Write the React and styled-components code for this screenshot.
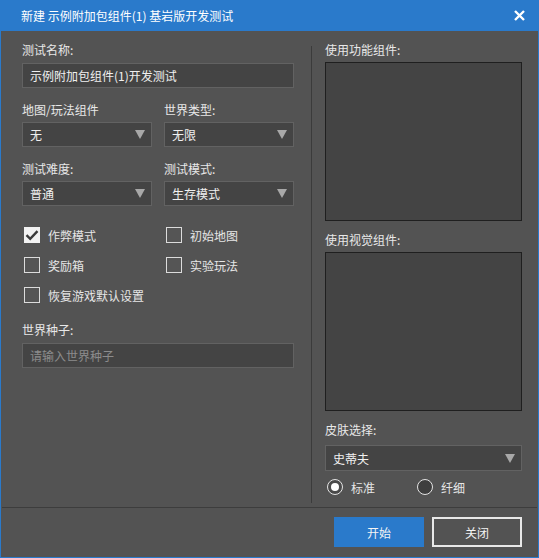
import React from 'react';
import styled, { createGlobalStyle } from 'styled-components';

const GlobalStyle = createGlobalStyle`
  html, body {
    margin: 0;
    padding: 0;
    background: #535353;
  }
  * { box-sizing: border-box; }
`;

const Window = styled.div`
  width: 539px;
  height: 558px;
  display: flex;
  flex-direction: column;
  background: #535353;
  border: 1px solid #2a7acb;
  border-top: none;
  font-family: "Noto Sans CJK SC", "Noto Sans", sans-serif;
  font-size: 12px;
  color: #e6e6e6;
  overflow: hidden;
`;

const TitleBar = styled.div`
  height: 31px;
  flex: none;
  background: #2a7acb;
  display: flex;
  align-items: center;
  justify-content: space-between;
  padding: 0 10px 0 21px;
  margin: 0 -1px;
  color: #fff;
  font-size: 12px;
`;

const CloseBtn = styled.div`
  width: 20px;
  height: 20px;
  display: flex;
  align-items: center;
  justify-content: center;
`;

const Body = styled.div`
  flex: 1;
  display: flex;
  padding: 11px 16px 0 21px;
`;

const LeftCol = styled.div`
  width: 272px;
  display: flex;
  flex-direction: column;
`;

const Divider = styled.div`
  width: 1px;
  background: #3b3b3b;
  margin: 4px 13px 4px 17px;
`;

const RightCol = styled.div`
  width: 197px;
  display: flex;
  flex-direction: column;
`;

const Label = styled.div`
  height: 16px;
  line-height: 16px;
  margin-bottom: ${p => p.$gap || 5}px;
  color: #e8e8e8;
`;

const Field = styled.div`
  display: flex;
  flex-direction: column;
  margin-bottom: ${p => p.$mb || 0}px;
`;

const Row = styled.div`
  display: grid;
  grid-template-columns: 130px 130px;
  column-gap: 12px;
  margin-bottom: ${p => p.$mb || 0}px;
`;

const Input = styled.div`
  height: 25px;
  background: #444444;
  border: 1px solid #626262;
  display: flex;
  align-items: center;
  padding: 0 7px;
  color: ${p => (p.$placeholder ? '#8c8c8c' : '#f0f0f0')};
`;

const Select = styled(Input)`
  justify-content: space-between;
  padding-right: 6px;
  height: ${p => p.$h || 25}px;
`;

const Arrow = styled.span`
  width: 0;
  height: 0;
  border-left: 5px solid transparent;
  border-right: 5px solid transparent;
  border-top: 9px solid #a8a8a8;
`;

const CheckGrid = styled.div`
  display: grid;
  grid-template-columns: 142px 130px;
  row-gap: 14px;
  padding-left: 2px;
  margin-top: 21px;
  margin-bottom: 19px;
`;

const CheckItem = styled.div`
  display: flex;
  align-items: center;
  gap: 8px;
  height: 16px;
  grid-column: ${p => (p.$full ? '1 / span 2' : 'auto')};
`;

const Box = styled.span`
  width: 16px;
  height: 16px;
  flex: none;
  display: flex;
  align-items: center;
  justify-content: center;
  background: ${p => (p.$checked ? '#f2f2f2' : '#555555')};
  border: 1px solid ${p => (p.$checked ? '#f2f2f2' : '#dcdcdc')};
`;

const Panel = styled.div`
  height: 159px;
  background: #444444;
  border: 1px solid #1f1f1f;
  margin-bottom: ${p => p.$mb || 0}px;
`;

const RadioRow = styled.div`
  display: grid;
  grid-template-columns: 90px 90px;
  margin-top: 8px;
  padding-left: 2px;
`;

const RadioItem = styled.div`
  display: flex;
  align-items: center;
  gap: 8px;
  height: 16px;
`;

const Circle = styled.span`
  width: 16px;
  height: 16px;
  flex: none;
  border-radius: 50%;
  border: 1.5px solid #e4e4e4;
  background: ${p => (p.$on ? '#4a4a4a' : '#3e3e3e')};
  display: flex;
  align-items: center;
  justify-content: center;
  &::after {
    content: '';
    width: 8px;
    height: 8px;
    border-radius: 50%;
    background: #ffffff;
    display: ${p => (p.$on ? 'block' : 'none')};
  }
`;

const Footer = styled.div`
  flex: none;
  height: 50px;
  border-top: 1px solid #3d3d3d;
  margin: 0 1px;
  display: flex;
  justify-content: flex-end;
  align-items: flex-start;
  gap: 8px;
  padding: 9px 15px 0 0;
`;

const Button = styled.button`
  width: 90px;
  height: 30px;
  font-family: inherit;
  font-size: 12px;
  color: #f4f4f4;
  background: ${p => (p.$primary ? '#2a7acb' : 'transparent')};
  border: ${p => (p.$primary ? 'none' : '2px solid #e8e8e8')};
  padding: 0;
  cursor: pointer;
`;

const Check = () => (
  <svg width="14" height="12" viewBox="0 0 14 12">
    <path d="M1.5 6.2 L5.2 9.8 L12.5 2.2" fill="none" stroke="#3a3a3a" strokeWidth="2.4" />
  </svg>
);

const checks = [
  { label: '作弊模式', checked: true },
  { label: '初始地图' },
  { label: '奖励箱' },
  { label: '实验玩法' },
  { label: '恢复游戏默认设置', full: true },
];

export default function App() {
  return (
    <>
      <GlobalStyle />
      <Window>
        <TitleBar>
          <span>新建 示例附加包组件(1) 基岩版开发测试</span>
          <CloseBtn>
            <svg width="11" height="11" viewBox="0 0 11 11">
              <path d="M1 1 L10 10 M10 1 L1 10" stroke="#ffffff" strokeWidth="2.4" />
            </svg>
          </CloseBtn>
        </TitleBar>
        <Body>
          <LeftCol>
            <Field $mb={14}>
              <Label>测试名称:</Label>
              <Input>示例附加包组件(1)开发测试</Input>
            </Field>
            <Row $mb={14}>
              <Field>
                <Label $gap={4}>地图/玩法组件</Label>
                <Select>无<Arrow /></Select>
              </Field>
              <Field>
                <Label $gap={4}>世界类型:</Label>
                <Select>无限<Arrow /></Select>
              </Field>
            </Row>
            <Row>
              <Field>
                <Label $gap={4}>测试难度:</Label>
                <Select>普通<Arrow /></Select>
              </Field>
              <Field>
                <Label $gap={4}>测试模式:</Label>
                <Select>生存模式<Arrow /></Select>
              </Field>
            </Row>
            <CheckGrid>
              {checks.map(c => (
                <CheckItem key={c.label} $full={c.full}>
                  <Box $checked={c.checked}>{c.checked && <Check />}</Box>
                  <span>{c.label}</span>
                </CheckItem>
              ))}
            </CheckGrid>
            <Field>
              <Label>世界种子:</Label>
              <Input $placeholder>请输入世界种子</Input>
            </Field>
          </LeftCol>
          <Divider />
          <RightCol>
            <Label $gap={4}>使用功能组件:</Label>
            <Panel $mb={11} />
            <Label $gap={4}>使用视觉组件:</Label>
            <Panel $mb={11} />
            <Label $gap={7}>皮肤选择:</Label>
            <Select $h={26}>史蒂夫<Arrow /></Select>
            <RadioRow>
              <RadioItem>
                <Circle $on />
                <span>标准</span>
              </RadioItem>
              <RadioItem>
                <Circle />
                <span>纤细</span>
              </RadioItem>
            </RadioRow>
          </RightCol>
        </Body>
        <Footer>
          <Button $primary>开始</Button>
          <Button>关闭</Button>
        </Footer>
      </Window>
    </>
  );
}
